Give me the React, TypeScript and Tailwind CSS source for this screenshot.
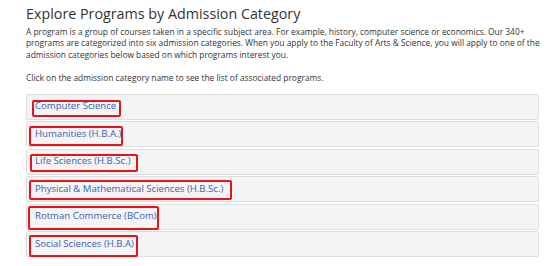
import React from "react";

const rows = [
  { label: "Computer Science", box: { left: 5, top: 5, width: 89, height: 17 } },
  { label: "Humanities (H.B.A.)", box: { left: 2, top: 4, width: 94, height: 20 } },
  { label: "Life Sciences (H.B.Sc.)", box: { left: 3, top: 4, width: 108, height: 18 } },
  { label: "Physical & Mathematical Sciences (H.B.Sc.)", box: { left: 2, top: 3, width: 203, height: 20 } },
  { label: "Rotman Commerce (BCom)", box: { left: 1, top: 1, width: 131, height: 24 } },
  { label: "Social Sciences (H.B.A)", box: { left: 2, top: 3, width: 109, height: 22 } },
];

export default function App() {
  return (
    <div
      className="w-[554px] h-[266px] bg-white overflow-hidden pl-[26px] pr-[15px] pt-[4px]"
      style={{ fontFamily: '"Open Sans", "Liberation Sans", sans-serif' }}
    >
      <h1 className="text-[14.3px] leading-[20px] text-[#333] font-normal m-0 whitespace-nowrap">
        Explore Programs by Admission Category
      </h1>
      <p className="text-[8.4px] leading-[11.7px] text-[#333] mt-[1.6px] whitespace-nowrap">
        A program is a group of courses taken in a specific subject area. For example, history, computer science or economics. Our 340+
        <br />
        programs are categorized into six admission categories. When you apply to the Faculty of Arts &amp; Science, you will apply to one of the
        <br />
        admission categories below based on which programs interest you.
      </p>
      <p className="text-[8.4px] leading-[11.7px] text-[#333] mt-[11.2px] whitespace-nowrap">
        Click on the admission category name to see the list of associated programs.
      </p>
      <div className="mt-[10px] flex flex-col gap-[1.5px]">
        {rows.map((r) => (
          <div
            key={r.label}
            className="relative h-[26px] bg-[#f4f4f4] border border-[#dedede] rounded-[2px] flex items-center pl-[8px]"
          >
            <span className="text-[9.6px] text-[#3a63b3] whitespace-nowrap">{r.label}</span>
            <div
              className="absolute border-2 border-[#e8141b] rounded-[2px]"
              style={{ left: r.box.left, top: r.box.top, width: r.box.width, height: r.box.height }}
            />
          </div>
        ))}
      </div>
    </div>
  );
}
